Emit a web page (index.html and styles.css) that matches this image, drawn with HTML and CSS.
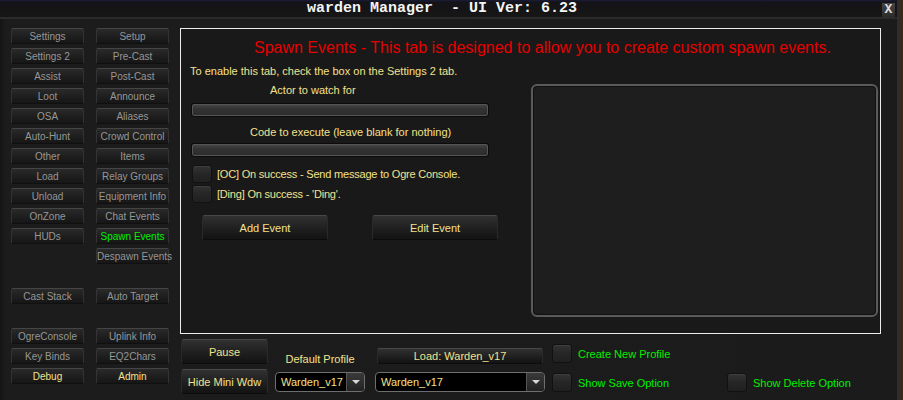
FILE: index.html
```html
<!DOCTYPE html>
<html>

<head>
    <meta charset="utf-8">
    <title>warden Manager - UI Ver: 6.23</title>
    <link rel="stylesheet" href="styles.css">
</head>

<body>
    <div class="window">
        <!-- Title bar -->
        <div class="titlebar">
            <div class="title">warden Manager&nbsp; - UI Ver: 6.23</div>
            <div class="close">X</div>
        </div>

        <div class="frame">
            <!-- Tab buttons -->
            <div class="tabs">
                <div class="tab">Settings</div>
                <div class="tab">Setup</div>
                <div class="tab">Settings 2</div>
                <div class="tab">Pre-Cast</div>
                <div class="tab">Assist</div>
                <div class="tab">Post-Cast</div>
                <div class="tab">Loot</div>
                <div class="tab">Announce</div>
                <div class="tab">OSA</div>
                <div class="tab">Aliases</div>
                <div class="tab">Auto-Hunt</div>
                <div class="tab">Crowd Control</div>
                <div class="tab">Other</div>
                <div class="tab">Items</div>
                <div class="tab">Load</div>
                <div class="tab">Relay Groups</div>
                <div class="tab">Unload</div>
                <div class="tab">Equipment Info</div>
                <div class="tab">OnZone</div>
                <div class="tab">Chat Events</div>
                <div class="tab">HUDs</div>
                <div class="tab active">Spawn Events</div>
                <div></div>
                <div class="tab">Despawn Events</div>
                <div></div>
                <div></div>
                <div class="tab">Cast Stack</div>
                <div class="tab">Auto Target</div>
                <div></div>
                <div></div>
                <div class="tab">OgreConsole</div>
                <div class="tab">Uplink Info</div>
                <div class="tab">Key Binds</div>
                <div class="tab">EQ2Chars</div>
                <div class="tab gold">Debug</div>
                <div class="tab gold">Admin</div>
            </div>

            <div class="main">
                <!-- Spawn events tab -->
                <div class="panel">
                    <h2 class="heading">Spawn Events - This tab is designed to allow you to create custom spawn events.</h2>
                    <div class="panel-row">
                        <div class="form">
                            <p class="note">To enable this tab, check the box on the Settings 2 tab.</p>
                            <p class="label actor">Actor to watch for</p>
                            <div class="field"></div>
                            <p class="label code">Code to execute (leave blank for nothing)</p>
                            <div class="field field-2"></div>
                            <div class="checks">
                                <div class="check-row"><span class="box"></span>[OC] On success - Send message to Ogre Console.</div>
                                <div class="check-row"><span class="box"></span>[Ding] On success - 'Ding'.</div>
                            </div>
                            <div class="actions">
                                <div class="btn">Add Event</div>
                                <div class="btn">Edit Event</div>
                            </div>
                        </div>
                        <div class="list-box"></div>
                    </div>
                </div>

                <!-- Profile controls -->
                <div class="bottom">
                    <div class="btn small">Pause</div>
                    <div class="profile-label">Default Profile</div>
                    <div class="btn load">Load: Warden_v17</div>
                    <div class="opt"><span class="box"></span>Create New Profile</div>
                    <div></div>

                    <div class="btn small">Hide Mini Wdw</div>
                    <div class="select sel-1"><span>Warden_v17</span><span class="arrow"></span></div>
                    <div class="select sel-2"><span>Warden_v17</span><span class="arrow"></span></div>
                    <div class="opt low"><span class="box"></span>Show Save Option</div>
                    <div class="opt low"><span class="box"></span>Show Delete Option</div>
                </div>
            </div>
        </div>
    </div>
</body>

</html>
```

FILE: styles.css
```css
/* Ogre bot style window */
body {
    margin: 0;
    padding: 0;
    background-color: #3b2a1c;
    font-family: "Liberation Sans", Arial, sans-serif;
    font-size: 11px;
}

.window {
    width: 897px;
    height: 400px;
    background-color: #1a1a1a;
    border-right: 3px solid #2e2e2e;
    overflow: hidden;
}

.titlebar {
    display: flex;
    align-items: center;
    height: 17px;
    background: linear-gradient(#1b1b3a 0, #141418 2px, #161616 100%);
    border-bottom: 2px solid #2b2b2b;
}

.title {
    flex: 1;
    text-align: center;
    font-family: "Liberation Mono", "Courier New", monospace;
    font-weight: bold;
    font-size: 15px;
    line-height: 17px;
    color: #f4f4f4;
    padding-left: 2px;
}

.close {
    width: 13px;
    height: 14px;
    margin: 2px 2px 0 0;
    background: linear-gradient(#444, #2c2c2c);
    color: #ddd;
    font-family: "Liberation Mono", monospace;
    font-weight: bold;
    font-size: 13px;
    line-height: 14px;
    text-align: center;
}

.frame {
    display: flex;
    height: 381px;
    background: linear-gradient(90deg, #141414 0, #1c1c1c 6px, #1b1b1b 100%);
}

/* left tab grid */
.tabs {
    display: grid;
    grid-template-columns: 73px 73px;
    grid-template-rows: repeat(18, 16px);
    column-gap: 12px;
    row-gap: 4px;
    width: 169px;
    padding: 9px 0 0 11px;
}

.tab {
    background: linear-gradient(#2a2a2a, #1d1d1d 60%, #161616);
    border: 1px solid #333;
    border-top-color: #454545;
    border-bottom-color: #101010;
    border-radius: 2px;
    color: #979797;
    font-size: 10px;
    line-height: 15px;
    text-align: center;
    white-space: nowrap;
    box-sizing: border-box;
}

.tab.active {
    color: #00f000;
}

.tab.gold {
    color: #f3e28c;
}

.main {
    display: flex;
    flex-direction: column;
    width: 701px;
}

.panel {
    height: 306px;
    margin-top: 9px;
    border: 1px solid #ececec;
    box-sizing: border-box;
    background-color: #191919;
}

.heading {
    margin: 10px 0 0 73px;
    font-size: 16px;
    font-weight: normal;
    line-height: 18px;
    color: #e60000;
    white-space: nowrap;
}

.panel-row {
    display: flex;
    align-items: flex-start;
    margin-top: 7px;
    padding-left: 9px;
}

.form {
    width: 310px;
}

p {
    margin: 0;
    line-height: 14px;
    color: #f3e28c;
    white-space: nowrap;
}

.actor {
    margin-top: 5px;
    padding-left: 80px;
}

.code {
    margin-top: 8px;
    padding-left: 60px;
}

.field {
    width: 298px;
    height: 14px;
    margin: 6px 0 0 1px;
    box-sizing: border-box;
    border: 1px solid #0b0b0b;
    border-radius: 3px;
    background: linear-gradient(#4a4a4a, #343434 35%, #2c2c2c);
    box-shadow: inset 0 0 0 1px #555;
}

.field-2 {
    margin-top: 4px;
}

.checks {
    display: flex;
    flex-direction: column;
    gap: 2px;
    margin-top: 8px;
    padding-left: 2px;
}

.check-row {
    display: flex;
    align-items: center;
    gap: 5px;
    color: #f3e28c;
    letter-spacing: -0.2px;
    white-space: nowrap;
}

.box {
    display: inline-block;
    width: 20px;
    height: 18px;
    box-sizing: border-box;
    border: 1px solid #111;
    border-radius: 3px;
    background: linear-gradient(#333, #262626 50%, #202020);
    box-shadow: inset 0 1px 0 #3e3e3e;
}

.actions {
    display: flex;
    gap: 44px;
    margin-top: 12px;
    padding-left: 12px;
}

.btn {
    width: 126px;
    height: 25px;
    box-sizing: border-box;
    border: 1px solid #2a2a2a;
    border-top-color: #484848;
    border-bottom-color: #0c0c0c;
    border-radius: 3px;
    background: linear-gradient(#313131, #1f1f1f 55%, #131313);
    color: #f3e28c;
    line-height: 24px;
    text-align: center;
    white-space: nowrap;
}

.list-box {
    width: 347px;
    height: 233px;
    margin: 20px 0 0 31px;
    box-sizing: border-box;
    border: 2px solid #5a5a5a;
    border-radius: 6px;
    background-color: #1e1e1e;
    box-shadow: inset 0 0 0 1px #111;
}

/* profile area under the panel */
.bottom {
    display: grid;
    grid-template-columns: 94px 100px 177px 175px 1fr;
    grid-template-rows: 25px 25px;
    row-gap: 5px;
    margin-top: 5px;
    padding-left: 1px;
}

.btn.small {
    width: 87px;
}

.profile-label {
    align-self: end;
    width: 90px;
    margin-bottom: -2px;
    line-height: 14px;
    color: #f3e28c;
    text-align: center;
    white-space: nowrap;
}

.btn.load {
    align-self: end;
    width: 166px;
    height: 16px;
    margin-left: 2px;
    line-height: 14px;
    border-radius: 2px;
}

.select {
    display: flex;
    align-items: center;
    justify-content: space-between;
    align-self: center;
    height: 20px;
    box-sizing: border-box;
    padding-left: 5px;
    border: 1px solid #6e6e6e;
    border-radius: 4px;
    background-color: #000;
    color: #f3e28c;
}

.sel-1 {
    width: 90px;
}

.sel-2 {
    width: 170px;
}

.arrow {
    position: relative;
    width: 18px;
    height: 18px;
    box-sizing: border-box;
    border-left: 1px solid #555;
    border-radius: 0 3px 3px 0;
    background: linear-gradient(#3a3a3a, #222);
}

.arrow::after {
    content: "";
    position: absolute;
    left: 5px;
    top: 7px;
    border-left: 4px solid transparent;
    border-right: 4px solid transparent;
    border-top: 4px solid #d8d8d8;
}

.opt {
    display: flex;
    align-items: center;
    align-self: end;
    gap: 6px;
    margin-bottom: 1px;
    color: #00f000;
    white-space: nowrap;
}

.opt .box {
    width: 20px;
    height: 19px;
}

.opt.low {
    align-self: center;
    margin: 2px 0 0 0;
}
```
